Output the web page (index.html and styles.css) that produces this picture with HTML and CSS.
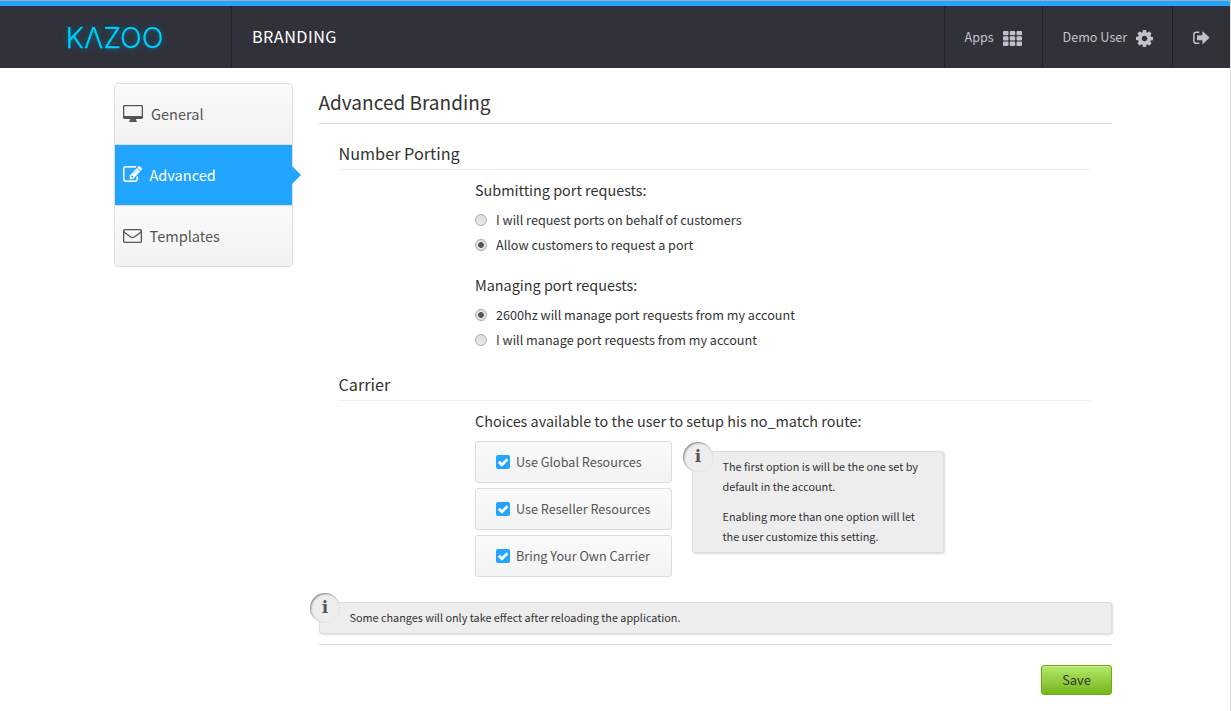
FILE: index.html
```html
<!DOCTYPE html>
<html lang="en">
<head>
<meta charset="utf-8">
<title>Branding</title>
<link rel="stylesheet" href="styles.css">
</head>
<body>
<header class="topbar">
  <div class="logo">
    <svg width="120" height="40" viewBox="0 0 120 40" role="img" aria-label="KAZOO">
      <text class="logo-text" x="9.500" y="30.500" textLength="98" lengthAdjust="spacingAndGlyphs">KΛZOO</text>
    </svg>
  </div>
  <div class="app-name">BRANDING</div>
  <nav class="links">
    <a class="link apps">Apps
      <svg width="19" height="15" viewBox="0 0 19 15"><path fill="currentColor" d="M1 0h3.500q1 0 1 1v2.300q0 1-1 1H1q-1 0-1-1V1q0-1 1-1zM7.750 0h3.500q1 0 1 1v2.300q0 1-1 1h-3.500q-1 0-1-1V1q0-1 1-1zM14.500 0H18q1 0 1 1v2.300q0 1-1 1h-3.500q-1 0-1-1V1q0-1 1-1zM1 5.300h3.500q1 0 1 1v2.300q0 1-1 1H1q-1 0-1-1V6.300q0-1 1-1zM7.750 5.300h3.500q1 0 1 1v2.300q0 1-1 1h-3.500q-1 0-1-1V6.300q0-1 1-1zM14.500 5.300H18q1 0 1 1v2.300q0 1-1 1h-3.500q-1 0-1-1V6.300q0-1 1-1zM1 10.600h3.500q1 0 1 1v2.300q0 1-1 1H1q-1 0-1-1v-2.300q0-1 1-1zM7.750 10.600h3.500q1 0 1 1v2.300q0 1-1 1h-3.500q-1 0-1-1v-2.300q0-1 1-1zM14.500 10.600H18q1 0 1 1v2.300q0 1-1 1h-3.500q-1 0-1-1v-2.300q0-1 1-1z"/></svg>
    </a>
    <a class="link user">Demo User
      <svg width="17" height="17" viewBox="128 128 1536 1536"><path fill="currentColor" d="M1152 896q0-106-75-181t-181-75-181 75-75 181 75 181 181 75 181-75 75-181zm512-109v222q0 12-8 23t-20 13l-185 28q-19 54-39 91 35 50 107 138 10 12 10 25t-9 23q-27 37-99 108t-94 71q-12 0-26-9l-138-108q-44 23-91 38-16 136-29 186-7 28-36 28h-222q-14 0-24.500-8.500t-11.500-21.500l-28-184q-49-16-90-37l-141 107q-10 9-25 9-14 0-25-11-126-114-165-168-7-10-7-23 0-12 8-23 15-21 51-66.500t54-70.500q-27-50-41-99l-183-27q-13-2-21-12.500t-8-23.500v-222q0-12 8-23t19-13l186-28q14-46 39-92-40-57-107-138-10-12-10-24 0-10 9-23 26-36 98.500-107.500t94.500-71.500q13 0 26 10l138 107q44-23 91-38 16-136 29-186 7-28 36-28h222q14 0 24.500 8.500t11.500 21.500l28 184q49 16 90 37l142-107q9-9 24-9 13 0 25 10 129 119 165 170 7 8 7 22 0 12-8 23-15 21-51 66.500t-54 70.500q26 50 41 98l183 28q13 2 21 12.500t8 23.500z"/></svg>
    </a>
    <a class="link logout">
      <svg width="17" height="14" viewBox="0 0 17 14"><path fill="none" stroke="currentColor" stroke-width="1.500" d="M6.300 1.250H3.300Q.9 1.250.9 3.600v6.300q0 2.350 2.400 2.350h3"/><path fill="currentColor" d="M4.600 4.300h4.800V1.200q0-1 .8-.4l6 5.500q.4.400 0 .8l-6 5.700q-.8.600-.8-.4V9.200H4.600q-.6 0-.6-.6V4.900q0-.6.6-.6z"/></svg>
    </a>
  </nav>
</header>
<div class="page">
  <ul class="menu">
    <li class="menu-item general">
      <svg width="20" height="17" viewBox="0 0 20 17"><path fill="currentColor" fill-rule="evenodd" d="M1.400 0h17.200Q20 0 20 1.400v11.200q0 1.400-1.400 1.400h-5.700v1.300q.9 0 .9.850v.85H6.200v-.85q0-.85.9-.85V14H1.400Q0 14 0 12.600V1.400Q0 0 1.400 0zM1.300 1.200v9.700h17.400V1.200z"/></svg>
      <span>General</span>
    </li>
    <li class="menu-item active">
      <svg width="19" height="16" viewBox="0 128 1792 1408" preserveAspectRatio="none"><path fill="currentColor" stroke="currentColor" stroke-width="30" d="M888 1184l116-116-152-152-116 116v56h96v96h56zm440-720q-16-16-33 1l-350 350q-17 17-1 33t33-1l350-350q17-17 1-33zm80 594v190q0 119-84.500 203.500t-203.500 84.500h-832q-119 0-203.500-84.500t-84.500-203.500v-832q0-119 84.500-203.500t203.500-84.500h832q63 0 117 25 15 7 18 23 3 17-9 29l-49 49q-14 14-32 8-23-6-45-6h-832q-66 0-113 47t-47 113v832q0 66 47 113t113 47h832q66 0 113-47t47-113v-126q0-13 9-22l64-64q15-15 35-7t20 29zm-96-738l288 288-672 672h-288v-288zm444 132l-92 92-288-288 92-92q28-28 68-28t68 28l152 152q28 28 28 68t-28 68z"/></svg>
      <span>Advanced</span>
    </li>
    <li class="menu-item templates">
      <svg width="19" height="14" viewBox="0 0 19 14"><rect x=".65" y=".65" width="17.700" height="12.700" rx="1.200" fill="none" stroke="currentColor" stroke-width="1.300"/><path fill="none" stroke="currentColor" stroke-width="1.300" d="M.8 2.200Q1.300 3.400 2.600 4.300L7.700 8Q9.500 9.200 11.300 8l5.100-3.700q1.300-.9 1.800-2.100"/></svg>
      <span>Templates</span>
    </li>
  </ul>
  <main class="content">
    <h1 class="title">Advanced Branding</h1>
    <section class="section">
      <h2 class="section-title">Number Porting</h2>
      <div class="form">
        <div class="question">Submitting port requests:</div>
        <div class="options">
          <label class="option"><i class="radio"></i>I will request ports on behalf of customers</label>
          <label class="option"><i class="radio checked"></i>Allow customers to request a port</label>
        </div>
        <div class="question next">Managing port requests:</div>
        <div class="options">
          <label class="option"><i class="radio checked"></i>2600hz will manage port requests from my account</label>
          <label class="option"><i class="radio"></i>I will manage port requests from my account</label>
        </div>
      </div>
    </section>
    <section class="section carrier">
      <h2 class="section-title">Carrier</h2>
      <div class="form">
        <div class="question">Choices available to the user to setup his no_match route:</div>
        <div class="choices-row">
          <div class="choices">
            <label class="choice"><span class="check"><svg width="14" height="14" viewBox="0 0 14 14"><path d="M2.800 6.700 5.900 9.800 11.500 4.200"/></svg></span>Use Global Resources</label>
            <label class="choice"><span class="check"><svg width="14" height="14" viewBox="0 0 14 14"><path d="M2.800 6.700 5.900 9.800 11.500 4.200"/></svg></span>Use Reseller Resources</label>
            <label class="choice"><span class="check"><svg width="14" height="14" viewBox="0 0 14 14"><path d="M2.800 6.700 5.900 9.800 11.500 4.200"/></svg></span>Bring Your Own Carrier</label>
          </div>
          <div class="info side">
            <b class="info-icon">i</b>
            <p>The first option is will be the one set by<br>default in the account.</p>
            <p>Enabling more than one option will let<br>the user customize this setting.</p>
          </div>
        </div>
      </div>
    </section>
    <div class="info bottom">
      <b class="info-icon">i</b>
      <p>Some changes will only take effect after reloading the application.</p>
    </div>
    <div class="actions"><button class="save">Save</button></div>
  </main>
</div>
</body>
</html>
```
FILE: styles.css
```css
* { box-sizing: border-box; }
body {
  margin: 0;
  width: 1231px;
  height: 711px;
  overflow: hidden;
  border-right: 1px solid #ddd;
  background: #fff;
  color: #333;
  font: 12.63px/20px "Noto Sans CJK SC", sans-serif;
}
.topbar {
  display: flex;
  height: 68px;
  border-top: 1px solid #aaa;
  background: linear-gradient(#22a5ff 5px, #31313a 5px);
  padding-top: 5px;
}
.logo {
  width: 232px;
  border-right: 1px solid #22222a;
  padding: 11px 0 0 56px;
}
.logo svg { display: block; overflow: visible; }
.logo-text {
  font: 300 28px Inter, sans-serif;
  fill: #00cfff;
  stroke: #00cfff;
  stroke-width: .3px;
  filter: drop-shadow(0 0 3px rgba(0, 190, 255, .6)) drop-shadow(0 -1px 0 #111);
}
.app-name {
  padding-left: 20px;
  font-size: 16.24px;
  letter-spacing: .45px;
  line-height: 61px;
  color: #fff;
}
.links { display: flex; margin-left: auto; }
.link {
  display: flex;
  align-items: center;
  border-left: 1px solid #22222a;
  padding: 0 0 0 19.5px;
  color: #c1c1cb;
}
.apps { width: 98px; gap: 9px; }
.user { width: 130px; gap: 9px; }
.logout { width: 58px; padding-left: 20px; }
.link svg { position: relative; top: 1px; }
.page { display: flex; gap: 26px; padding: 15px 118px 0 114px; }
.menu {
  list-style: none;
  margin: 0;
  padding: 0;
  width: 179px;
  height: 184px;
  border: 1px solid #ddd;
  border-radius: 4px;
}
.menu-item {
  display: flex;
  align-items: center;
  height: 61px;
  border-bottom: 1px solid #ddd;
  padding: 0 0 0 8px;
  gap: 8px;
  background: linear-gradient(#fafafa, #f2f2f2);
  font-size: 14.55px;
  color: #555;
}
.menu-item svg { position: relative; top: -1px; }
.templates svg { top: 0; }
.active, .templates { gap: 7.5px; }
.menu-item:first-child { border-radius: 3px 3px 0 0; }
.menu-item:last-child { height: 60px; border: 0; border-radius: 0 0 3px 3px; }
.active { position: relative; background: #22a5ff; color: #fff; }
.active::after {
  content: "";
  position: absolute;
  left: 177px;
  top: 21px;
  border: 9px solid transparent;
  border-left-color: #22a5ff;
  border-right: 0;
}
.content { width: 793px; }
.title {
  margin: 0;
  padding-bottom: 3px;
  border-bottom: 1px solid #ddd;
  font-size: 19.02px;
  font-weight: 400;
  line-height: 37px;
  text-indent: -.5px;
}
.section { padding: 19px 20px 0; }
.carrier { padding-top: 22px; }
.section-title {
  margin: 0 0 10px;
  padding-bottom: 6px;
  border-bottom: 1px solid #eee;
  font-size: 16.24px;
  font-weight: 400;
  text-indent: -.5px;
}
.form { padding-left: 136px; }
.question { font-size: 14.42px; }
.next { margin-top: 18px; }
.options { padding-top: 7px; }
.option { display: flex; align-items: center; height: 25px; gap: 9px; }
.radio {
  width: 12px;
  height: 12px;
  border: 1px solid #a9a9a9;
  border-radius: 50%;
  background: linear-gradient(#dedede, #e8e8e8);
}
.checked { background: radial-gradient(circle at center, #555 2.5px, #e3e3e3 3.2px); }
.choices-row { display: flex; align-items: flex-start; gap: 20px; padding-top: 10px; }
.choices { display: flex; flex-direction: column; gap: 5px; width: 197px; }
.choice {
  display: flex;
  align-items: center;
  height: 42px;
  gap: 6px;
  padding-left: 20px;
  border: 1px solid #ddd;
  border-radius: 3px;
  background: linear-gradient(#fafafa, #f3f3f3);
  color: #555;
}
.check { width: 14px; height: 14px; border-radius: 2px; background: #22a5ff; }
.check svg { display: block; }
.check path { fill: none; stroke: #fff; stroke-width: 2.7; }
.info {
  position: relative;
  border: 1px solid #ddd;
  border-radius: 3px;
  background: #ededed;
  box-shadow: 1px 1px 2px rgba(0, 0, 0, .15);
  padding: 4px 0 6px 29.5px;
  font-size: 10.83px;
}
.info p { margin: 0; }
.info p + p { margin-top: 10px; }
.side { width: 252px; height: 102px; margin-top: 10px; }
.bottom { height: 32px; margin-top: 25px; }
.info-icon {
  position: absolute;
  left: -10px;
  top: -10px;
  width: 30px;
  height: 30px;
  border-radius: 50%;
  background: #ededed;
  box-shadow: inset 1px 1px 2px #888;
  font: bold 17px/29px "DejaVu Serif", serif;
  text-align: center;
  color: #555;
}
.actions {
  display: flex;
  justify-content: flex-end;
  margin-top: 10px;
  padding-top: 20px;
  border-top: 1px solid #ddd;
}
.save {
  width: 71px;
  height: 30px;
  padding: 0;
  border: 1px solid #69ad14;
  border-radius: 3px;
  background: linear-gradient(#b4e868, #74b71b);
  box-shadow: inset 0 1px 0 rgba(255, 255, 255, .3);
  font: 12.8px/28px "Noto Sans CJK SC", sans-serif;
  color: #333;
}
```
